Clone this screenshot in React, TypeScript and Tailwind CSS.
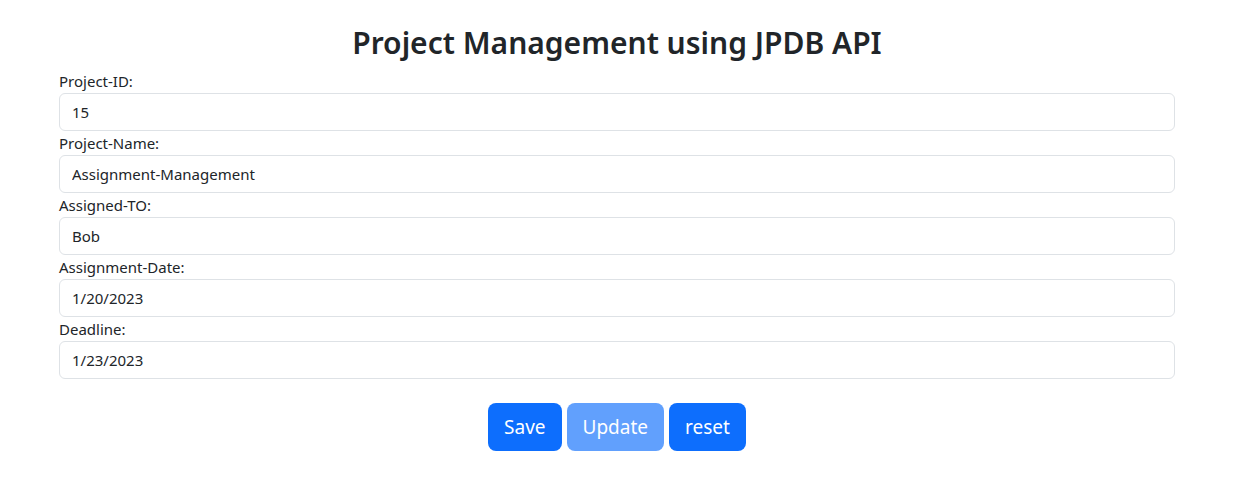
const fields = [
  { label: "Project-ID:", value: "15" },
  { label: "Project-Name:", value: "Assignment-Management" },
  { label: "Assigned-TO:", value: "Bob" },
  { label: "Assignment-Date:", value: "1/20/2023" },
  { label: "Deadline:", value: "1/23/2023" },
];

export default function App() {
  return (
    <div className="min-h-screen bg-white text-[#212529] font-['Noto_Sans',sans-serif]">
      <div className="ml-[59px] w-[1116px] pt-6">
        <h2 className="text-center text-[30px] leading-[38px] font-semibold mb-[7px]">
          Project Management using JPDB API
        </h2>
        <form>
          {fields.map((f) => (
            <div key={f.label}>
              <label className="block text-[15px] leading-6">{f.label}</label>
              <input
                type="text"
                readOnly
                value={f.value}
                className="block w-full h-[38px] px-3 text-[15px] border border-[#dee2e6] rounded-md outline-none"
              />
            </div>
          ))}
          <div className="flex justify-center gap-[5px] mt-6">
            <button type="button" className="h-12 px-4 rounded-lg bg-[#0d6efd] text-white text-[19px]">
              Save
            </button>
            <button type="button" disabled className="h-12 px-4 rounded-lg bg-[#0d6efd] opacity-65 text-white text-[19px]">
              Update
            </button>
            <button type="button" className="h-12 px-4 rounded-lg bg-[#0d6efd] text-white text-[19px]">
              reset
            </button>
          </div>
        </form>
      </div>
    </div>
  );
}
